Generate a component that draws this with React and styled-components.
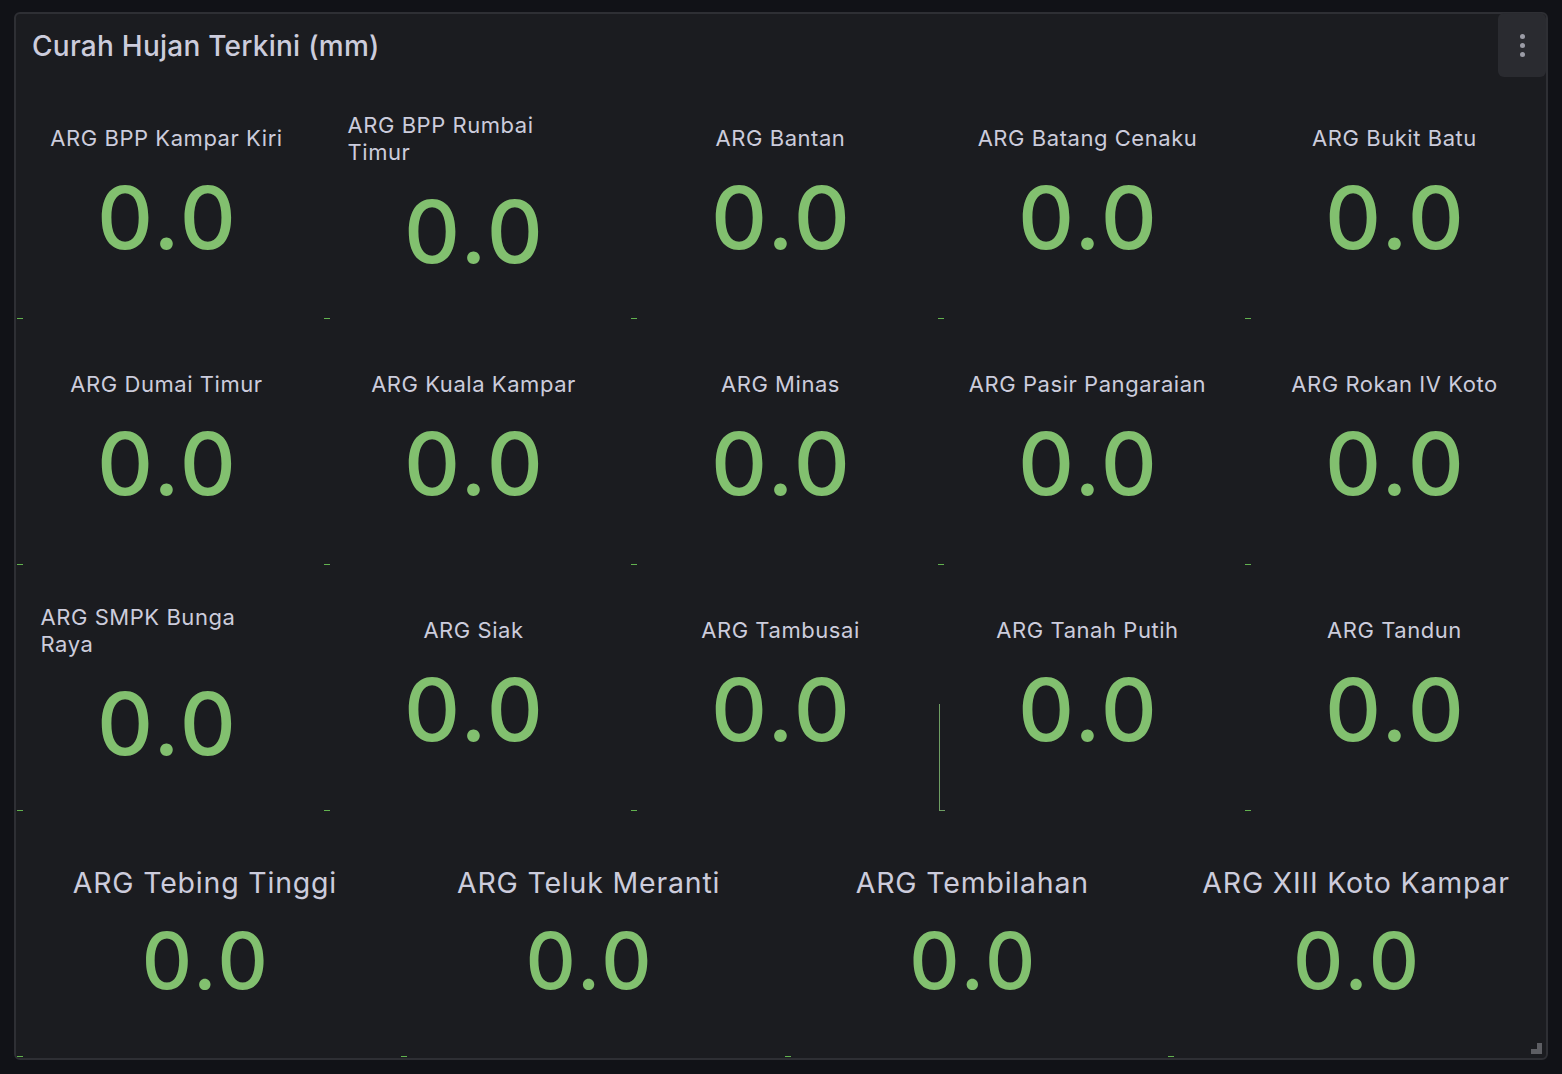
import React from "react";
import styled, { createGlobalStyle } from "styled-components";

const GlobalStyle = createGlobalStyle`
  html, body { margin: 0; padding: 0; background: #111217; }
  body { font-family: Inter, "Noto Sans", "Liberation Sans", sans-serif; }
  * { box-sizing: border-box; }
`;

const Page = styled.div`
  width: 1562px;
  height: 1074px;
  padding: 12px 14px 14px 14px;
  background: #111217;
`;

const Panel = styled.section`
  position: relative;
  width: 1534px;
  height: 1048px;
  background: #1b1c20;
  border: 2px solid #2e2f34;
  border-radius: 6px;
  display: flex;
  flex-direction: column;
`;

const Header = styled.header`
  height: 66px;
  display: flex;
  align-items: flex-start;
  justify-content: space-between;
`;

const Title = styled.h2`
  margin: 0;
  padding-left: 16px;
  height: 64px;
  display: flex;
  align-items: center;
  font-size: 28px;
  font-weight: 500;
  color: #ccccdc;
  letter-spacing: 0.25px;
`;

const MenuButton = styled.button`
  margin-top: -1px;
  width: 48px;
  height: 64px;
  border: none;
  border-radius: 6px;
  background: #2a2b30;
  display: flex;
  flex-direction: column;
  align-items: center;
  justify-content: center;
  gap: 4px;
  padding: 0;
`;

const Dot = styled.span`
  width: 5px;
  height: 5px;
  border-radius: 50%;
  background: #9b9ca6;
`;

const Grid = styled.div`
  flex: 1;
  display: flex;
  flex-direction: column;
  gap: 8px;
  padding: 0 2px 2px 1px;
`;

const Row = styled.div`
  height: 238px;
  display: grid;
  grid-template-columns: repeat(${(p) => p.$cols}, 1fr);
  gap: 8px;
`;

const Cell = styled.div`
  position: relative;
  display: flex;
  flex-direction: column;
  align-items: center;
  justify-content: center;
  padding-bottom: ${(p) => (p.$big ? "9px" : "12px")};
`;

const Label = styled.div`
  position: relative;
  z-index: 1;
  color: #ccccdc;
  font-size: ${(p) => (p.$big ? "28.5px" : "22px")};
  line-height: ${(p) => (p.$big ? "34px" : "27px")};
  letter-spacing: ${(p) => (p.$big ? "0.8px" : "0.55px")};
  font-weight: 400;
  white-space: nowrap;
  text-align: ${(p) => (p.$wrapped ? "left" : "center")};
  width: ${(p) => (p.$wrapped ? "252px" : "auto")};
`;

const Value = styled.div`
  position: relative;
  z-index: 1;
  color: #82c06f;
  font-size: ${(p) => (p.$big ? "78px" : "87px")};
  line-height: 1;
  font-weight: 500;
  margin-top: 22px;
  letter-spacing: ${(p) => (p.$big ? "3px" : "2.5px")};
  margin-right: ${(p) => (p.$big ? "-3px" : "-2.5px")};
`;

const Spark = styled.svg`
  position: absolute;
  left: 0;
  bottom: -1px;
  overflow: visible;
`;

const ResizeHandle = styled.svg`
  position: absolute;
  right: 4px;
  bottom: 4px;
`;

const rows = [
  [
    ["ARG BPP Kampar Kiri"],
    ["ARG BPP Rumbai", "Timur"],
    ["ARG Bantan"],
    ["ARG Batang Cenaku"],
    ["ARG Bukit Batu"],
  ],
  [
    ["ARG Dumai Timur"],
    ["ARG Kuala Kampar"],
    ["ARG Minas"],
    ["ARG Pasir Pangaraian"],
    ["ARG Rokan IV Koto"],
  ],
  [
    ["ARG SMPK Bunga", "Raya"],
    ["ARG Siak"],
    ["ARG Tambusai"],
    ["ARG Tanah Putih"],
    ["ARG Tandun"],
  ],
  [
    ["ARG Tebing Tinggi"],
    ["ARG Teluk Meranti"],
    ["ARG Tembilahan"],
    ["ARG XIII Koto Kampar"],
  ],
];

function Sparkline({ spike }) {
  if (spike) {
    return (
      <Spark width="10" height="107" viewBox="0 0 10 107">
        <rect x="1" y="0" width="1" height="107" fill="#6f9f63" />
        <rect x="1" y="106" width="6" height="1" fill="#6f9f63" />
      </Spark>
    );
  }
  return (
    <Spark width="6" height="1" viewBox="0 0 6 1">
      <rect x="0" y="0" width="6" height="1" fill="#62b24f" />
    </Spark>
  );
}

export default function App() {
  return (
    <>
      <GlobalStyle />
      <Page>
        <Panel>
          <Header>
            <Title>Curah Hujan Terkini (mm)</Title>
            <MenuButton aria-label="menu">
              <Dot />
              <Dot />
              <Dot />
            </MenuButton>
          </Header>
          <Grid>
            {rows.map((row, ri) => {
              const big = ri === 3;
              return (
                <Row key={ri} $cols={row.length}>
                  {row.map((lines, ci) => (
                    <Cell key={ci} $big={big}>
                      <Label $big={big} $wrapped={lines.length > 1}>
                        {lines.map((l, i) => (
                          <div key={i}>{l}</div>
                        ))}
                      </Label>
                      <Value $big={big}>0.0</Value>
                      <Sparkline spike={ri === 2 && ci === 3} />
                    </Cell>
                  ))}
                </Row>
              );
            })}
          </Grid>
          <ResizeHandle width="11" height="11" viewBox="0 0 11 11">
            <path d="M6 0h5v11H0V6h6z" fill="#5d5e63" />
          </ResizeHandle>
        </Panel>
      </Page>
    </>
  );
}
